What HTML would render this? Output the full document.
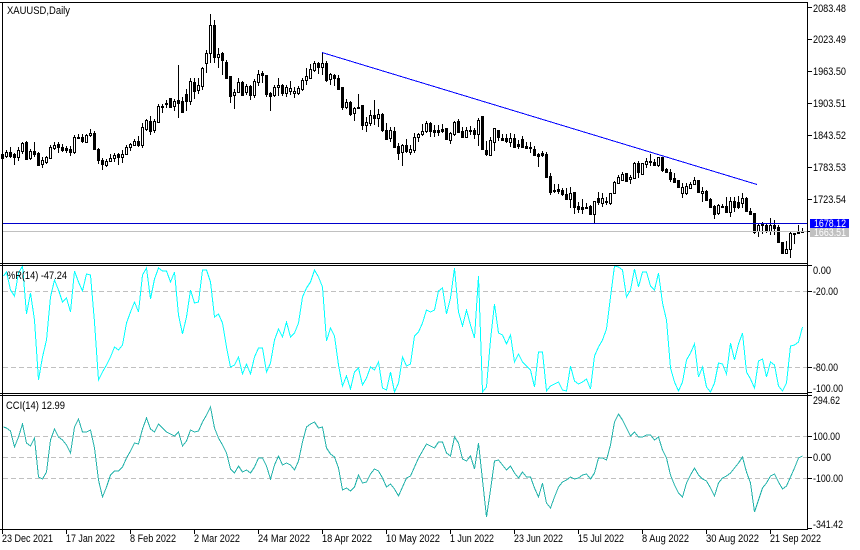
<!DOCTYPE html>
<html><head><meta charset="utf-8"><title>XAUUSD,Daily</title>
<style>html,body{margin:0;padding:0;background:#fff}svg{display:block}
text{font-family:"Liberation Sans",sans-serif;font-size:11px;fill:#000}</style></head><body>
<svg xmlns="http://www.w3.org/2000/svg" width="860" height="550" viewBox="0 0 860 550">
<rect width="860" height="550" fill="#fff"/>
<g shape-rendering="crispEdges" fill="none">
<path stroke="#000" d="M2.5 153V159M6.5 150V158M10.5 147V158M14.5 153V165M18.5 147V161M22.5 142V154M26.5 141V160M30.5 149V160M34.5 142V157M38.5 152V166M42.5 157V168M46.5 156V164M50.5 145V159M54.5 142V150M58.5 142V153M62.5 144V152M66.5 146V153M70.5 146V156M74.5 135V154M78.5 134V139M82.5 134V143M86.5 134V143M90.5 129V137M94.5 131V150M98.5 148V164M102.5 158V170M106.5 159V167M110.5 154V162M114.5 153V162M118.5 153V165M122.5 150V163M126.5 145V155M130.5 143V151M134.5 139V146M138.5 136V147M142.5 123V148M146.5 119V131M150.5 116V135M154.5 119V133M158.5 104V123M162.5 104V113M166.5 100V108M170.5 98V108M174.5 99V111M178.5 65V118M182.5 97V113M186.5 89V111M190.5 78V105M194.5 78V99M198.5 78V94M202.5 67V90M206.5 50V73M210.5 14V63M214.5 20V63M218.5 48V68M222.5 52V75M226.5 60V79M230.5 76V103M234.5 89V109M238.5 78V93M242.5 81V96M246.5 84V95M250.5 85V100M254.5 79V98M258.5 70V86M262.5 71V83M266.5 75V97M270.5 92V111M274.5 85V97M278.5 78V96M282.5 84V96M286.5 85V97M290.5 81V95M294.5 87V98M298.5 86V95M302.5 78V91M306.5 68V85M310.5 64V79M314.5 61V72M318.5 62V74M322.5 52V75M326.5 61V82M330.5 73V85M334.5 74V86M338.5 75V90M342.5 87V110M346.5 99V109M350.5 101V116M354.5 107V121M358.5 94V109M362.5 105V130M366.5 117V132M370.5 110V126M374.5 100V125M378.5 109V127M382.5 113V132M386.5 123V140M390.5 127V142M394.5 127V148M398.5 143V160M402.5 144V166M406.5 139V153M410.5 145V155M414.5 133V153M418.5 133V142M422.5 124V136M426.5 121V133M430.5 122V137M434.5 125V137M438.5 125V136M442.5 124V133M446.5 128V140M450.5 132V144M454.5 121V136M458.5 119V133M462.5 127V138M466.5 127V138M470.5 126V135M474.5 128V139M478.5 118V146M482.5 116V149M486.5 141V156M490.5 137V155M494.5 128V151M498.5 130V141M502.5 134V141M506.5 134V143M510.5 133V147M514.5 134V147M518.5 140V149M522.5 136V148M526.5 142V149M530.5 142V153M534.5 146V156M538.5 153V167M542.5 151V157M546.5 152V178M550.5 173V195M554.5 184V193M558.5 184V194M562.5 188V196M566.5 188V200M570.5 187V208M574.5 192V214M578.5 202V213M582.5 199V214M586.5 203V209M590.5 205V215M594.5 201V223M598.5 192V205M602.5 193V207M606.5 197V205M610.5 193V205M614.5 181V194M618.5 175V184M622.5 172V181M626.5 173V182M630.5 175V184M634.5 162V179M638.5 161V178M642.5 163V175M646.5 158V168M650.5 154V166M654.5 159V166M658.5 157V167M662.5 157V172M666.5 168V173M670.5 169V182M674.5 173V182M678.5 180V188M682.5 183V198M686.5 183V195M690.5 182V189M694.5 177V185M698.5 180V193M702.5 187V202M706.5 190V201M710.5 198V207M714.5 205V219M718.5 204V215M722.5 204V208M726.5 197V213M730.5 197V217M734.5 197V212M738.5 196V209M742.5 193V208M746.5 197V212M750.5 208V215M754.5 213V234M758.5 223V237M762.5 222V234M766.5 224V233M770.5 218V235M774.5 220V235M778.5 225V243M782.5 242V254M786.5 241V253M790.5 232V258M794.5 233V244M798.5 225V234M802.5 228V233"/>
<path fill="#000" stroke="#000" d="M1.5 154.5h2v4h-2zM9.5 152.5h2v4h-2zM13.5 154.5h2v3h-2zM25.5 142.5h2v17h-2zM33.5 151.5h2v3h-2zM37.5 153.5h2v12h-2zM57.5 144.5h2v3h-2zM61.5 147.5h2v3h-2zM65.5 148.5h2v2h-2zM69.5 149.5h2v3h-2zM77.5 137.5h2v1h-2zM81.5 137.5h2v4h-2zM93.5 133.5h2v16h-2zM97.5 149.5h2v11h-2zM101.5 160.5h2v4h-2zM117.5 154.5h2v3h-2zM137.5 141.5h2v4h-2zM149.5 121.5h2v10h-2zM161.5 106.5h2v1h-2zM165.5 103.5h2v1h-2zM169.5 98.5h2v9h-2zM177.5 100.5h2v3h-2zM181.5 101.5h2v11h-2zM185.5 94.5h2v7h-2zM193.5 82.5h2v9h-2zM213.5 25.5h2v32h-2zM221.5 53.5h2v7h-2zM225.5 62.5h2v16h-2zM229.5 76.5h2v20h-2zM241.5 82.5h2v13h-2zM249.5 86.5h2v9h-2zM261.5 73.5h2v2h-2zM265.5 75.5h2v19h-2zM269.5 93.5h2v3h-2zM281.5 85.5h2v8h-2zM317.5 63.5h2v4h-2zM325.5 63.5h2v17h-2zM333.5 75.5h2v3h-2zM337.5 78.5h2v11h-2zM341.5 87.5h2v20h-2zM349.5 102.5h2v12h-2zM357.5 107.5h2v1h-2zM361.5 105.5h2v20h-2zM373.5 115.5h2v3h-2zM381.5 114.5h2v16h-2zM385.5 130.5h2v9h-2zM393.5 131.5h2v16h-2zM397.5 146.5h2v7h-2zM405.5 145.5h2v6h-2zM429.5 123.5h2v8h-2zM433.5 130.5h2v2h-2zM437.5 130.5h2v2h-2zM441.5 129.5h2v2h-2zM445.5 128.5h2v11h-2zM457.5 121.5h2v11h-2zM461.5 131.5h2v6h-2zM469.5 130.5h2v1h-2zM473.5 130.5h2v4h-2zM481.5 116.5h2v33h-2zM485.5 150.5h2v4h-2zM497.5 130.5h2v7h-2zM501.5 138.5h2v2h-2zM505.5 138.5h2v3h-2zM513.5 138.5h2v9h-2zM517.5 144.5h2v2h-2zM521.5 139.5h2v8h-2zM525.5 146.5h2v2h-2zM529.5 147.5h2v1h-2zM533.5 149.5h2v6h-2zM537.5 154.5h2v2h-2zM541.5 153.5h2v2h-2zM545.5 154.5h2v23h-2zM549.5 176.5h2v16h-2zM553.5 190.5h2v1h-2zM557.5 189.5h2v2h-2zM561.5 190.5h2v4h-2zM565.5 194.5h2v5h-2zM573.5 192.5h2v15h-2zM577.5 206.5h2v3h-2zM581.5 207.5h2v2h-2zM585.5 207.5h2v1h-2zM589.5 206.5h2v8h-2zM597.5 198.5h2v4h-2zM605.5 201.5h2v1h-2zM625.5 173.5h2v8h-2zM637.5 163.5h2v9h-2zM653.5 162.5h2v3h-2zM661.5 157.5h2v13h-2zM665.5 169.5h2v3h-2zM669.5 172.5h2v7h-2zM673.5 178.5h2v4h-2zM677.5 180.5h2v7h-2zM697.5 180.5h2v12h-2zM705.5 191.5h2v9h-2zM709.5 199.5h2v8h-2zM713.5 206.5h2v8h-2zM721.5 206.5h2v1h-2zM725.5 206.5h2v6h-2zM733.5 201.5h2v6h-2zM737.5 202.5h2v5h-2zM745.5 198.5h2v13h-2zM749.5 211.5h2v3h-2zM753.5 213.5h2v19h-2zM765.5 225.5h2v6h-2zM773.5 225.5h2v3h-2zM777.5 227.5h2v15h-2zM781.5 242.5h2v11h-2zM793.5 233.5h2v1h-2zM797.5 232.5h2v1h-2zM801.5 231.5h2v1h-2z"/>
<path fill="#fff" stroke="#000" d="M5.5 152.5h2v4h-2zM17.5 150.5h2v7h-2zM21.5 143.5h2v8h-2zM29.5 151.5h2v7h-2zM41.5 160.5h2v4h-2zM45.5 157.5h2v5h-2zM49.5 147.5h2v11h-2zM53.5 145.5h2v3h-2zM73.5 137.5h2v15h-2zM85.5 135.5h2v7h-2zM89.5 133.5h2v2h-2zM105.5 161.5h2v4h-2zM109.5 158.5h2v3h-2zM113.5 155.5h2v3h-2zM121.5 154.5h2v3h-2zM125.5 147.5h2v7h-2zM129.5 144.5h2v3h-2zM133.5 141.5h2v4h-2zM141.5 127.5h2v18h-2zM145.5 120.5h2v9h-2zM153.5 121.5h2v9h-2zM157.5 106.5h2v16h-2zM173.5 101.5h2v5h-2zM189.5 81.5h2v20h-2zM197.5 85.5h2v5h-2zM201.5 68.5h2v18h-2zM205.5 53.5h2v10h-2zM209.5 25.5h2v28h-2zM217.5 54.5h2v3h-2zM233.5 92.5h2v3h-2zM237.5 82.5h2v10h-2zM245.5 86.5h2v6h-2zM253.5 81.5h2v14h-2zM257.5 74.5h2v8h-2zM273.5 87.5h2v8h-2zM277.5 85.5h2v2h-2zM285.5 87.5h2v6h-2zM289.5 88.5h2v3h-2zM293.5 91.5h2v2h-2zM297.5 88.5h2v5h-2zM301.5 80.5h2v9h-2zM305.5 76.5h2v4h-2zM309.5 69.5h2v9h-2zM313.5 63.5h2v7h-2zM321.5 63.5h2v4h-2zM329.5 74.5h2v5h-2zM345.5 102.5h2v5h-2zM353.5 108.5h2v5h-2zM365.5 122.5h2v3h-2zM369.5 115.5h2v8h-2zM377.5 114.5h2v4h-2zM389.5 130.5h2v8h-2zM401.5 145.5h2v7h-2zM409.5 149.5h2v3h-2zM413.5 137.5h2v13h-2zM417.5 134.5h2v3h-2zM421.5 131.5h2v3h-2zM425.5 123.5h2v8h-2zM449.5 133.5h2v7h-2zM453.5 122.5h2v12h-2zM465.5 130.5h2v7h-2zM477.5 120.5h2v14h-2zM489.5 140.5h2v15h-2zM493.5 128.5h2v14h-2zM509.5 138.5h2v4h-2zM569.5 193.5h2v6h-2zM593.5 201.5h2v13h-2zM601.5 198.5h2v5h-2zM609.5 193.5h2v10h-2zM613.5 182.5h2v11h-2zM617.5 177.5h2v6h-2zM621.5 174.5h2v6h-2zM629.5 177.5h2v2h-2zM633.5 163.5h2v15h-2zM641.5 163.5h2v11h-2zM645.5 161.5h2v3h-2zM649.5 161.5h2v1h-2zM657.5 157.5h2v8h-2zM681.5 187.5h2v6h-2zM685.5 186.5h2v7h-2zM689.5 184.5h2v4h-2zM693.5 180.5h2v4h-2zM701.5 191.5h2v2h-2zM717.5 205.5h2v8h-2zM729.5 201.5h2v11h-2zM741.5 198.5h2v5h-2zM757.5 225.5h2v6h-2zM761.5 224.5h2v1h-2zM769.5 225.5h2v6h-2zM785.5 249.5h2v4h-2zM789.5 233.5h2v16h-2z"/>
<path stroke="#c0c0c0" d="M3 231.5H807"/>
<path stroke="#0000cd" d="M3 223.5H807"/>
<path stroke="#0000ff" d="M322 52.5L757 184.5"/>
<path stroke="#c0c0c0" stroke-dasharray="5 3" d="M3 291.5H807M3 367.5H807M3 436.5H807M3 457.5H807M3 478.5H807"/>
<polyline stroke="#00ffff" points="3.5,276 6.5,272 10.5,290 14.5,296 18.5,273 22.5,266 26.5,314 30.5,293 34.5,320 38.5,380 42.5,357 46.5,340 50.5,297 54.5,280 58.5,290 62.5,302 66.5,298 70.5,312 74.5,271 78.5,282 82.5,291 86.5,274 90.5,275 94.5,322 98.5,380 102.5,372 106.5,365 110.5,357 114.5,347 118.5,350 122.5,345 126.5,323 130.5,312 134.5,302 138.5,312 142.5,275 146.5,268 150.5,299 154.5,279 158.5,268 162.5,271 166.5,271 170.5,282 174.5,272 178.5,315 182.5,334 186.5,317 190.5,290 194.5,303 198.5,302 202.5,270 206.5,270 210.5,282 214.5,317 218.5,314 222.5,323 226.5,347 230.5,367 234.5,365 238.5,357 242.5,374 246.5,364 250.5,374 254.5,357 258.5,348 262.5,348 266.5,372 270.5,363 274.5,340 278.5,329 282.5,337 286.5,322 290.5,337 294.5,333 298.5,323 302.5,297 306.5,288 310.5,282 314.5,270 318.5,277 322.5,287 326.5,341 330.5,328 334.5,336 338.5,365 342.5,386 346.5,376 350.5,389 354.5,372 358.5,368 362.5,385 366.5,378 370.5,367 374.5,370 378.5,362 382.5,388 386.5,390 390.5,372 394.5,392 398.5,383 402.5,357 406.5,366 410.5,364 414.5,336 418.5,332 422.5,323 426.5,310 430.5,312 434.5,310 438.5,291 442.5,288 446.5,314 450.5,298 454.5,268 458.5,312 462.5,326 466.5,310 470.5,325 474.5,338 478.5,276 482.5,392 486.5,387 490.5,340 494.5,304 498.5,333 502.5,335 506.5,344 510.5,335 514.5,362 518.5,354 522.5,362 526.5,366 530.5,370 534.5,387 538.5,352 542.5,352 546.5,391 550.5,386 554.5,384 558.5,382 562.5,390 566.5,391 570.5,366 574.5,381 578.5,384 582.5,382 586.5,379 590.5,389 594.5,356 598.5,347 602.5,340 606.5,329 610.5,297 614.5,266 618.5,267 622.5,270 626.5,297 630.5,290 634.5,269 638.5,287 642.5,272 646.5,272 650.5,286 654.5,290 658.5,273 662.5,303 666.5,320 670.5,368 674.5,382 678.5,391 682.5,382 686.5,360 690.5,353 694.5,344 698.5,377 702.5,367 706.5,387 710.5,392 714.5,383 718.5,363 722.5,364 726.5,374 730.5,343 734.5,360 738.5,344 742.5,333 746.5,372 750.5,379 754.5,388 758.5,361 762.5,359 766.5,377 770.5,362 774.5,365 778.5,386 782.5,391 786.5,383 790.5,346 794.5,345 798.5,342 802.5,327"/>
<polyline stroke="#20b2aa" points="3.5,427 6.5,428 10.5,431 14.5,447 18.5,437 22.5,424 26.5,443 30.5,446 34.5,438 38.5,477 42.5,479 46.5,472 50.5,440 54.5,429 58.5,437 62.5,440 66.5,445 70.5,453 74.5,427 78.5,419 82.5,432 86.5,432 90.5,430 94.5,448 98.5,480 102.5,497 106.5,487 110.5,475 114.5,471 118.5,471 122.5,467 126.5,458 130.5,451 134.5,443 138.5,444 142.5,429 146.5,418 150.5,429 154.5,432 158.5,424 162.5,428 166.5,432 170.5,434 174.5,436 178.5,432 182.5,446 186.5,441 190.5,430 194.5,432 198.5,431 202.5,422 206.5,415 210.5,407 214.5,428 218.5,438 222.5,445 226.5,453 230.5,469 234.5,473 238.5,466 242.5,472 246.5,470 250.5,473 254.5,467 258.5,458 262.5,458 266.5,466 270.5,479 274.5,465 278.5,456 282.5,465 286.5,463 290.5,465 294.5,470 298.5,461 302.5,442 306.5,427 310.5,424 314.5,422 318.5,428 322.5,427 326.5,448 330.5,454 334.5,457 338.5,468 342.5,490 346.5,488 350.5,491 354.5,487 358.5,475 362.5,483 366.5,482 370.5,474 374.5,469 378.5,471 382.5,478 386.5,487 390.5,484 394.5,489 398.5,496 402.5,487 406.5,478 410.5,476 414.5,467 418.5,458 422.5,451 426.5,444 430.5,446 434.5,448 438.5,442 442.5,442 446.5,453 450.5,456 454.5,437 458.5,443 462.5,459 466.5,461 470.5,456 474.5,469 478.5,443 482.5,480 486.5,517 490.5,490 494.5,461 498.5,460 502.5,465 506.5,470 510.5,466 514.5,473 518.5,478 522.5,472 526.5,477 530.5,477 534.5,488 538.5,497 542.5,483 546.5,503 550.5,508 554.5,497 558.5,487 562.5,482 566.5,480 570.5,477 574.5,479 578.5,478 582.5,475 586.5,474 590.5,479 594.5,473 598.5,458 602.5,458 606.5,460 610.5,445 614.5,422 618.5,414 622.5,420 626.5,428 630.5,436 634.5,432 638.5,437 642.5,437 646.5,435 650.5,435 654.5,440 658.5,437 662.5,450 666.5,458 670.5,475 674.5,485 678.5,493 682.5,497 686.5,483 690.5,475 694.5,468 698.5,475 702.5,479 706.5,481 710.5,488 714.5,496 718.5,483 722.5,478 726.5,476 730.5,473 734.5,468 738.5,463 742.5,457 746.5,472 750.5,483 754.5,512 758.5,500 762.5,488 766.5,483 770.5,476 774.5,474 778.5,482 782.5,489 786.5,486 790.5,477 794.5,468 798.5,458 802.5,456"/>
<path stroke="#000" d="M0 2.5H808M0 263.5H808M0 265.5H808M0 393.5H808M0 395.5H808M0 529.5H808M2.5 2V530M807.5 2V530"/>
<path stroke="#000" d="M808 7.5h4M808 39.5h4M808 71.5h4M808 103.5h4M808 135.5h4M808 167.5h4M808 199.5h4M808 231.5h4M808 265.5h4M808 291.5h4M808 367.5h4M808 392.5h4M808 395.5h4M808 436.5h4M808 457.5h4M808 478.5h4M808 528.5h4M2.5 530v4M66.5 530v4M130.5 530v4M194.5 530v4M258.5 530v4M322.5 530v4M386.5 530v4M450.5 530v4M514.5 530v4M578.5 530v4M642.5 530v4M706.5 530v4M770.5 530v4"/>
<rect x="810" y="219" width="39" height="9" fill="#0000ff"/>
<rect x="810" y="228" width="39" height="9" fill="#c0c0c0"/>
</g>
<text x="7" y="14" textLength="63" lengthAdjust="spacingAndGlyphs">XAUUSD,Daily</text>
<text x="7" y="279" textLength="60" lengthAdjust="spacingAndGlyphs">%R(14) -47.24</text>
<text x="6" y="409" textLength="59" lengthAdjust="spacingAndGlyphs">CCI(14) 12.99</text>
<g lengthAdjust="spacingAndGlyphs">
<text x="813" y="12" textLength="33" lengthAdjust="spacingAndGlyphs">2083.48</text>
<text x="813" y="43" textLength="33" lengthAdjust="spacingAndGlyphs">2023.49</text>
<text x="813" y="75" textLength="33" lengthAdjust="spacingAndGlyphs">1963.50</text>
<text x="813" y="107" textLength="33" lengthAdjust="spacingAndGlyphs">1903.51</text>
<text x="813" y="139" textLength="33" lengthAdjust="spacingAndGlyphs">1843.52</text>
<text x="813" y="171" textLength="33" lengthAdjust="spacingAndGlyphs">1783.53</text>
<text x="813" y="203" textLength="33" lengthAdjust="spacingAndGlyphs">1723.54</text>
<text x="814" y="227" textLength="32" lengthAdjust="spacingAndGlyphs" style="fill:#fff">1678.12</text>
<text x="814" y="236" textLength="32" lengthAdjust="spacingAndGlyphs" style="fill:#fff">1663.51</text>
<text x="813" y="274" textLength="18" lengthAdjust="spacingAndGlyphs">0.00</text>
<text x="813" y="295" textLength="25" lengthAdjust="spacingAndGlyphs">-20.00</text>
<text x="813" y="371" textLength="25" lengthAdjust="spacingAndGlyphs">-80.00</text>
<text x="813" y="392" textLength="30" lengthAdjust="spacingAndGlyphs">-100.00</text>
<text x="813" y="404" textLength="27" lengthAdjust="spacingAndGlyphs">294.62</text>
<text x="813" y="440" textLength="27" lengthAdjust="spacingAndGlyphs">100.00</text>
<text x="813" y="461" textLength="18" lengthAdjust="spacingAndGlyphs">0.00</text>
<text x="813" y="482" textLength="30" lengthAdjust="spacingAndGlyphs">-100.00</text>
<text x="813" y="528" textLength="30" lengthAdjust="spacingAndGlyphs">-341.42</text>
<text x="2" y="542" textLength="51" lengthAdjust="spacingAndGlyphs">23 Dec 2021</text>
<text x="66" y="542" textLength="49" lengthAdjust="spacingAndGlyphs">17 Jan 2022</text>
<text x="130" y="542" textLength="46" lengthAdjust="spacingAndGlyphs">8 Feb 2022</text>
<text x="194" y="542" textLength="46" lengthAdjust="spacingAndGlyphs">2 Mar 2022</text>
<text x="258" y="542" textLength="52" lengthAdjust="spacingAndGlyphs">24 Mar 2022</text>
<text x="322" y="542" textLength="50" lengthAdjust="spacingAndGlyphs">18 Apr 2022</text>
<text x="386" y="542" textLength="54" lengthAdjust="spacingAndGlyphs">10 May 2022</text>
<text x="450" y="542" textLength="44" lengthAdjust="spacingAndGlyphs">1 Jun 2022</text>
<text x="514" y="542" textLength="49" lengthAdjust="spacingAndGlyphs">23 Jun 2022</text>
<text x="578" y="542" textLength="46" lengthAdjust="spacingAndGlyphs">15 Jul 2022</text>
<text x="642" y="542" textLength="47" lengthAdjust="spacingAndGlyphs">8 Aug 2022</text>
<text x="706" y="542" textLength="53" lengthAdjust="spacingAndGlyphs">30 Aug 2022</text>
<text x="770" y="542" textLength="51" lengthAdjust="spacingAndGlyphs">21 Sep 2022</text>
</g>
</svg>
</body></html>
